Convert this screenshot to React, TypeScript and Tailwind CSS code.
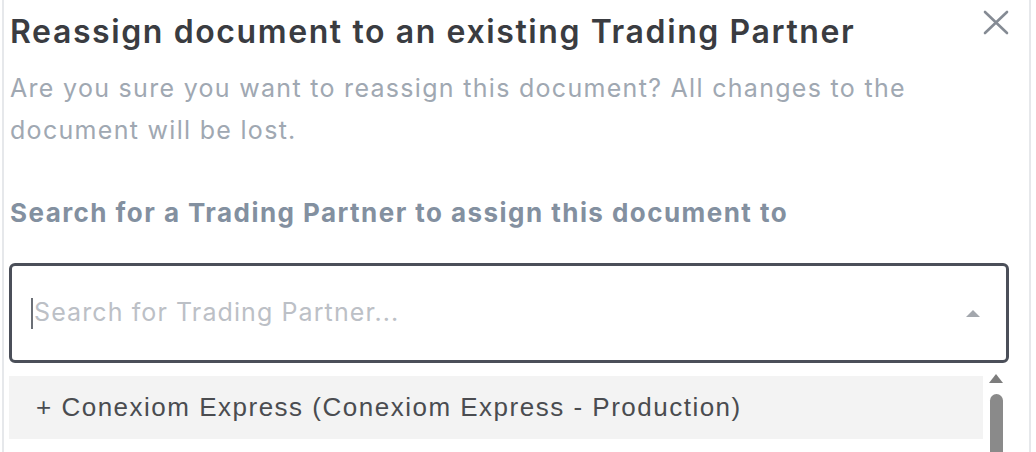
const App = () => {
  return (
    <div className="h-[452px] w-[1036px] overflow-hidden bg-white font-['Inter',sans-serif]">
      <div className="ml-[2px] mr-[5px] h-full border-x-2 border-[#e6e8eb] pl-[5px] pr-[20px]">
        <div className="flex items-start justify-between pt-[12px]">
          <h2 className="pl-[1px] text-[32px] font-semibold leading-[40px] tracking-[1.6px] text-[#3a3c41]">
            Reassign document to an existing Trading Partner
          </h2>
          <button aria-label="Close" className="mt-[-2px] text-[#858b94]">
            <svg width="26" height="25" viewBox="0 0 26 25" fill="none" stroke="currentColor" strokeWidth="2.6" strokeLinecap="round">
              <path d="M2 2L24 23M24 2L2 23" />
            </svg>
          </button>
        </div>

        <p className="mt-[15px] max-w-[915px] pl-[1px] text-[25px] leading-[42px] tracking-[1.3px] text-[#a0a8b2]">
          Are you sure you want to reassign this document? All changes to the document will be lost.
        </p>

        <label className="mt-[47px] block pl-[1px] text-[26px] font-bold leading-[30px] tracking-[1.45px] text-[#8390a0]">
          Search for a Trading Partner to assign this document to
        </label>

        <div className="mt-[35px] flex h-[100px] items-center rounded-[6px] border-[3px] border-[#4b4f59] pl-[19px] pr-[26px]">
          <span className="mr-[1px] h-[31px] w-[2px] bg-[#6b6f76]" />
          <span className="flex-1 text-[25px] tracking-[1.1px] text-[#bcc0c6]">Search for Trading Partner...</span>
          <span className="h-0 w-0 border-x-[7px] border-b-[7px] border-x-transparent border-b-[#a3a7ad]" />
        </div>

        <div className="mt-[13px] flex">
          <div className="flex h-[63px] flex-1 items-center bg-[#f3f3f3] pl-[27px] font-['Liberation_Sans',sans-serif] text-[26px] tracking-[1.5px] text-[#4a4c50]">
            + Conexiom Express (Conexiom Express - Production)
          </div>
          <div className="flex w-[26px] flex-col items-center">
            <span className="mt-[-2px] h-0 w-0 border-x-[7px] border-b-[9px] border-x-transparent border-b-[#7d7d7d]" />
            <span className="mt-[11px] h-[80px] w-[13px] rounded-t-full bg-[#8a8a8a]" />
          </div>
        </div>
      </div>
    </div>
  );
};

export default App;
